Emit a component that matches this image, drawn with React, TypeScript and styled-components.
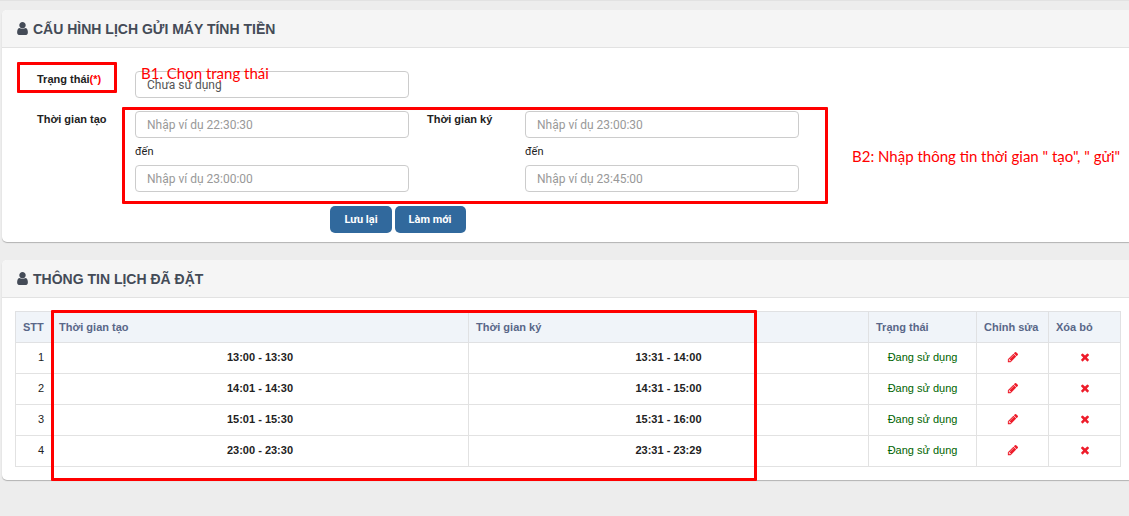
import React from 'react';
import styled, { createGlobalStyle } from 'styled-components';

const GlobalStyle = createGlobalStyle`
  * { box-sizing: border-box; }
  html { background: #ededed; }
  body {
    margin: 0;
    background: #ededed;
    border-top: 1px solid #e2e2e2;
    font-family: 'Liberation Sans', Arial, sans-serif;
    font-size: 11px;
    line-height: 16px;
    color: #222222;
  }
`;

const Page = styled.main`
  display: flex;
  flex-direction: column;
  gap: 18px;
  padding: 9px 0 35px 2px;
`;

const Panel = styled.section`
  position: relative;
  background: #ffffff;
  border-radius: 5px 0 0 5px;
  box-shadow: 0 1px 1px rgba(0, 0, 0, 0.25);
`;

const PanelHeader = styled.header`
  display: flex;
  align-items: center;
  gap: 3px;
  height: 38px;
  padding-left: 13px;
  background: #f5f5f5;
  border-bottom: 1px solid #e2e2e2;
  border-radius: 5px 0 0 0;
  color: #444b57;
`;

const PanelTitle = styled.h2`
  margin: 0;
  font-size: 14px;
  line-height: 20px;
  font-weight: 700;
  text-transform: uppercase;
`;

const Form = styled.form`
  display: flex;
  flex-direction: column;
  gap: 13px;
  padding: 23px 35px 9px;
`;

const FieldRow = styled.div`
  display: grid;
  grid-template-columns: 80px minmax(0, 274px) 80px minmax(0, 274px);
  column-gap: 18px;
`;

const Label = styled.label`
  font-weight: 700;
  white-space: nowrap;
`;

const Required = styled.span`
  color: #ff0000;
`;

const Range = styled.div`
  display: flex;
  flex-direction: column;
`;

const RangeSeparator = styled.span`
  font-family: Roboto, sans-serif;
  padding: 6px 0 5px;
`;

const controlStyle = `
  width: 100%;
  height: 27px;
  padding: 0 11px;
  border: 1px solid #cccccc;
  border-radius: 4px;
  background: #ffffff;
  font-family: Roboto, sans-serif;
  font-size: 12px;
  color: #555555;
`;

const TextInput = styled.input`
  ${controlStyle}
  &::placeholder { color: #999999; opacity: 1; }
`;

const Select = styled.select`
  ${controlStyle}
  appearance: none;
`;

const Actions = styled.div`
  display: flex;
  justify-content: center;
  gap: 3px;
  max-width: 722px;
  padding-top: 1px;
`;

const Button = styled.button`
  height: 27px;
  padding: 0 14px;
  border: 0;
  border-radius: 5px;
  background: #31699d;
  color: #ffffff;
  font-family: Roboto, sans-serif;
  font-size: 11px;
  font-weight: 700;
`;

const TableWrap = styled.div`
  padding: 13px 8px 13px 13px;
`;

const Table = styled.table`
  width: 100%;
  table-layout: fixed;
  border-collapse: collapse;
`;

const Col = styled.col<{ $width?: number }>`
  width: ${({ $width }) => ($width ? `${$width}px` : 'auto')};
`;

const HeadCell = styled.th`
  height: 31px;
  padding: 0 7px;
  border: 1px solid #e0e1e3;
  background: #f0f4f9;
  color: #596788;
  text-align: left;
  white-space: nowrap;
`;

const Cell = styled.td<{ $align?: string; $strong?: boolean; $color?: string }>`
  height: 31px;
  padding: 0 7px 2px;
  border: 1px solid #e2e2e2;
  text-align: ${({ $align }) => $align ?? 'center'};
  font-weight: ${({ $strong }) => ($strong ? 700 : 400)};
  color: ${({ $color }) => $color ?? '#222222'};
`;

const IconButton = styled.button`
  display: flex;
  margin: 0 auto;
  padding: 0;
  border: 0;
  background: none;
  color: #ee1c2a;
`;

const Highlight = styled.div<{ $x: number; $y: number; $w: number; $h: number }>`
  position: absolute;
  left: ${({ $x }) => $x}px;
  top: ${({ $y }) => $y}px;
  width: ${({ $w }) => $w}px;
  height: ${({ $h }) => $h}px;
  border: 3px solid #ff0000;
  border-radius: 1px;
  pointer-events: none;
`;

const Note = styled.span<{ $x: number; $y: number }>`
  position: absolute;
  left: ${({ $x }) => $x}px;
  top: ${({ $y }) => $y}px;
  font-family: Lato, sans-serif;
  font-size: 15px;
  line-height: 18px;
  color: #ff0000;
  white-space: nowrap;
  pointer-events: none;
`;

const icons = {
  user: 'M1536 1399q0 109-62.5 187t-150.5 78H469q-88 0-150.5-78T256 1399q0-85 8.5-160.5t31.5-152 58.5-131 94-89T583 832q131 128 313 128t313-128q76 0 134.5 34.5t94 89 58.5 131 31.5 152 8.5 160.5zm-256-887q0 159-112.5 271.5T896 896 624.5 783.5 512 512t112.5-271.5T896 128t271.5 112.5T1280 512z',
  pencil:
    'M491 1536l91-91-235-235-91 91v107h128v128h107zm523-928q0-22-22-22-10 0-17 7l-542 542q-7 7-7 17 0 22 22 22 10 0 17-7l542-542q7-7 7-17zm-54-192l416 416-832 832H128v-416zm683 96q0 53-37 90l-166 166-416-416 166-165q36-38 90-38 53 0 91 38l235 234q37 39 37 91z',
  times:
    'M1490 1322q0 40-28 68l-136 136q-28 28-68 28t-68-28l-294-294-294 294q-28 28-68 28t-68-28l-136-136q-28-28-28-68t28-68l294-294-294-294q-28-28-28-68t28-68l136-136q28-28 68-28t68 28l294 294 294-294q28-28 68-28t68 28l136 136q28 28 28 68t-28 68l-294 294 294 294q28 28 28 68z',
};

const Icon = ({ name, size }: { name: keyof typeof icons; size: number }) => (
  <svg width={size} height={size} viewBox="0 0 1792 1792" fill="currentColor" aria-hidden="true">
    <path d={icons[name]} />
  </svg>
);

const schedules = [
  { created: '13:00 - 13:30', signed: '13:31 - 14:00' },
  { created: '14:01 - 14:30', signed: '14:31 - 15:00' },
  { created: '15:01 - 15:30', signed: '15:31 - 16:00' },
  { created: '23:00 - 23:30', signed: '23:31 - 23:29' },
];

export default function App() {
  return (
    <>
      <GlobalStyle />
      <Page>
        <Panel>
          <PanelHeader>
            <Icon name="user" size={15} />
            <PanelTitle>Cấu hình lịch gửi máy tính tiền</PanelTitle>
          </PanelHeader>
          <Form onSubmit={(e) => e.preventDefault()}>
            <FieldRow>
              <Label htmlFor="status">
                Trạng thái<Required>(*)</Required>
              </Label>
              <Select id="status">
                <option>Chưa sử dụng</option>
                <option>Đang sử dụng</option>
              </Select>
            </FieldRow>
            <FieldRow>
              <Label htmlFor="create-from">Thời gian tạo</Label>
              <Range>
                <TextInput id="create-from" placeholder="Nhập ví dụ 22:30:30" />
                <RangeSeparator>đến</RangeSeparator>
                <TextInput aria-label="Thời gian tạo đến" placeholder="Nhập ví dụ 23:00:00" />
              </Range>
              <Label htmlFor="sign-from">Thời gian ký</Label>
              <Range>
                <TextInput id="sign-from" placeholder="Nhập ví dụ 23:00:30" />
                <RangeSeparator>đến</RangeSeparator>
                <TextInput aria-label="Thời gian ký đến" placeholder="Nhập ví dụ 23:45:00" />
              </Range>
            </FieldRow>
            <Actions>
              <Button type="submit">Lưu lại</Button>
              <Button type="reset">Làm mới</Button>
            </Actions>
          </Form>
          <Highlight $x={15} $y={52} $w={100} $h={31} />
          <Highlight $x={120} $y={97} $w={706} $h={97} />
          <Note $x={139} $y={54}>B1. Chọn trạng thái</Note>
          <Note $x={850} $y={137}>B2: Nhập thông tin thời gian " tạo", " gửi"</Note>
        </Panel>

        <Panel>
          <PanelHeader>
            <Icon name="user" size={15} />
            <PanelTitle>Thông tin lịch đã đặt</PanelTitle>
          </PanelHeader>
          <TableWrap>
            <Table>
              <colgroup>
                <Col $width={36} />
                <Col />
                <Col $width={400} />
                <Col $width={108} />
                <Col $width={72} />
                <Col $width={72} />
              </colgroup>
              <thead>
                <tr>
                  <HeadCell>STT</HeadCell>
                  <HeadCell>Thời gian tạo</HeadCell>
                  <HeadCell>Thời gian ký</HeadCell>
                  <HeadCell>Trạng thái</HeadCell>
                  <HeadCell>Chỉnh sửa</HeadCell>
                  <HeadCell>Xóa bỏ</HeadCell>
                </tr>
              </thead>
              <tbody>
                {schedules.map((row, i) => (
                  <tr key={row.created}>
                    <Cell $align="right">{i + 1}</Cell>
                    <Cell $strong>{row.created}</Cell>
                    <Cell $strong>{row.signed}</Cell>
                    <Cell $color="#006400">Đang sử dụng</Cell>
                    <Cell>
                      <IconButton type="button" aria-label="Chỉnh sửa">
                        <Icon name="pencil" size={12} />
                      </IconButton>
                    </Cell>
                    <Cell>
                      <IconButton type="button" aria-label="Xóa bỏ">
                        <Icon name="times" size={12} />
                      </IconButton>
                    </Cell>
                  </tr>
                ))}
              </tbody>
            </Table>
          </TableWrap>
          <Highlight $x={49} $y={50} $w={706} $h={171} />
        </Panel>
      </Page>
    </>
  );
}
